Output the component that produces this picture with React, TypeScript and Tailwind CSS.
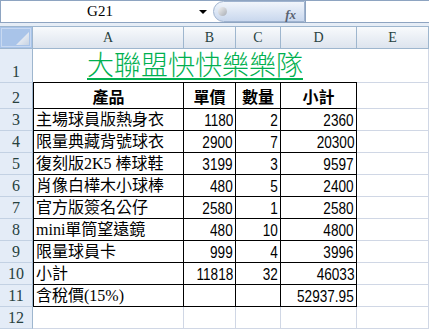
import React from "react";

type Row = {
  name: React.ReactNode;
  price: string;
  qty: string;
  total: string;
};

const rows: Row[] = [
  { name: "主場球員版熱身衣", price: "1180", qty: "2", total: "2360" },
  { name: "限量典藏背號球衣", price: "2900", qty: "7", total: "20300" },
  { name: "復刻版2K5 棒球鞋", price: "3199", qty: "3", total: "9597" },
  { name: "肖像白樺木小球棒", price: "480", qty: "5", total: "2400" },
  { name: "官方版簽名公仔", price: "2580", qty: "1", total: "2580" },
  { name: <><span className="font-['Liberation_Serif',serif]">mini</span>單筒望遠鏡</>, price: "480", qty: "10", total: "4800" },
  { name: "限量球員卡", price: "999", qty: "4", total: "3996" },
  { name: "小計", price: "11818", qty: "32", total: "46033" },
  { name: "含稅價(15%)", price: "", qty: "", total: "52937.95" },
];

const cjk = "font-['Liberation_Serif','Noto_Sans_CJK_TC',serif]";

function RowHead({ n }: { n: number }) {
  return (
    <div className="flex items-end justify-center border-r border-b border-r-[#9eb6ce] border-b-[#c3d1e3] bg-[#e4ecf7] font-['Liberation_Serif',serif] text-[16px] leading-[20px] text-[#27413e]">
      {n}
    </div>
  );
}

function ColHead({ label }: { label: string }) {
  return (
    <div className="flex items-center justify-center border-r border-b border-[#9eb6ce] bg-gradient-to-b from-[#f8fafc] to-[#dde4ee] font-['Liberation_Serif',serif] text-[14px] text-[#27413e]">
      {label}
    </div>
  );
}

function Num({ v }: { v: string }) {
  return (
    <div className="flex items-end justify-end overflow-hidden border-r border-b border-black pr-[2px] font-['Liberation_Sans',sans-serif] text-[16px] leading-[19px] text-black">
      <span className="inline-block origin-right scale-x-[0.85]">{v}</span>
    </div>
  );
}

function Empty() {
  return <div className="border-r border-b border-[#d0d7e5]" />;
}

export default function App() {
  return (
    <div className="h-[330px] w-[429px] overflow-hidden bg-white">
      {/* formula bar */}
      <div className="flex h-[23px] border-t border-b border-[#8ea4c1] bg-white">
        <div className="relative flex w-[213px] items-center justify-center border-l border-[#8ea4c1]">
          <span className="pr-[14px] font-['Liberation_Serif',serif] text-[15px] text-black">G21</span>
          <span className="absolute right-[6px] top-[9px] h-0 w-0 border-x-[4px] border-t-[4px] border-x-transparent border-t-black" />
        </div>
        <div className="relative flex w-[92px] items-center rounded-l-full border border-[#9fb3cf] bg-gradient-to-b from-[#f1f5fb] to-[#c9d8ee]">
          <span className="ml-[4px] h-[9px] w-[9px] rounded-full bg-gradient-to-br from-[#f4f4f4] to-[#a8adb5]" />
          <span className="absolute right-[8px] top-[3px] font-['Liberation_Serif',serif] text-[13px] font-bold italic text-[#5a6270]">fx</span>
        </div>
        <div className="flex-1 border-l border-[#8ea4c1]" />
      </div>
      <div className="h-[4px] border-b border-[#9eb6ce] bg-[#e6edf6]" />

      {/* sheet */}
      <div className={`grid grid-cols-[33px_151px_52px_45px_76px_72px] grid-rows-[22px_34px_26px_repeat(10,22px)] ${cjk}`}>
        <div className="relative border-r border-b border-[#9eb6ce] bg-[#a9c4e9]">
          <div className="absolute inset-[1px] border border-[#c8d9f1]" />
          <div className="absolute bottom-[3px] right-[3px] h-[13px] w-[13px] bg-gradient-to-br from-[#ffffff] to-[#c7d3e3] [clip-path:polygon(100%_0,100%_100%,0_100%)]" />
        </div>
        {["A", "B", "C", "D", "E"].map((c) => (
          <ColHead key={c} label={c} />
        ))}

        {/* row 1 */}
        <RowHead n={1} />
        <div className="col-span-4 flex items-end justify-center border-b border-black pb-[2px]">
          <span className="border-b-2 border-[#00b050] font-['Noto_Sans_CJK_TC',sans-serif] text-[27px] font-light leading-[28px] text-[#00b050]">
            大聯盟快快樂樂隊
          </span>
        </div>
        <Empty />

        {/* row 2 */}
        <RowHead n={2} />
        {["產品", "單價", "數量", "小計"].map((h, i) => (
          <div
            key={h}
            className={`flex items-end justify-center border-r border-b border-black font-['Noto_Sans_CJK_TC',sans-serif] text-[16px] font-bold leading-[23px] text-black ${i === 0 ? "border-l" : ""}`}
          >
            {h}
          </div>
        ))}
        <Empty />

        {rows.map((r, i) => (
          <React.Fragment key={i}>
            <RowHead n={i + 3} />
            <div className="flex items-end overflow-hidden whitespace-nowrap border-l border-r border-b border-black pl-[2px] text-[16px] leading-[20px] text-black">
              {r.name}
            </div>
            <Num v={r.price} />
            <Num v={r.qty} />
            <Num v={r.total} />
            <Empty />
          </React.Fragment>
        ))}

        {/* row 12 */}
        <RowHead n={12} />
        <Empty />
        <Empty />
        <Empty />
        <Empty />
        <Empty />
      </div>
    </div>
  );
}
